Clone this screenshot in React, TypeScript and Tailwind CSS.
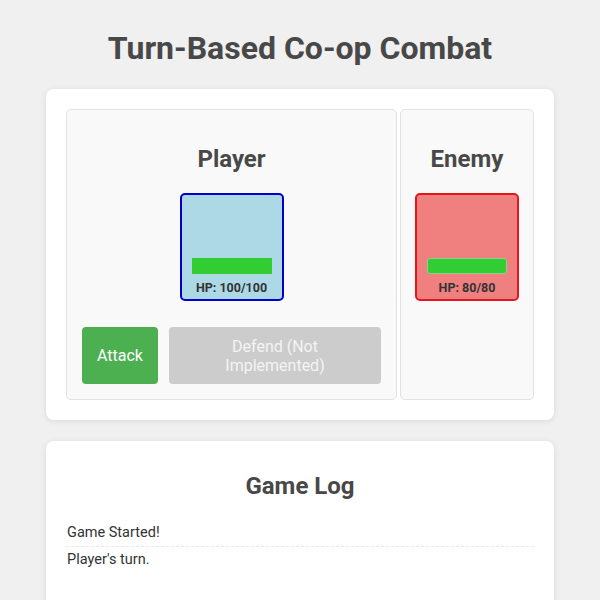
import React from "react";

function HealthBox({
  hp,
  max,
  box,
  bar,
}: {
  hp: number;
  max: number;
  box: string;
  bar: string;
}) {
  return (
    <div
      className={`w-[104px] h-[108px] rounded-[5px] border-2 flex flex-col items-center justify-end pb-[4px] ${box}`}
    >
      <div className={`w-[80px] h-[16px] mb-[7px] ${bar}`} />
      <div className="text-[12.5px] leading-[14px] font-bold text-[#333]">
        HP: {hp}/{max}
      </div>
    </div>
  );
}

export default function App() {
  const log = ["Game Started!", "Player's turn."];
  return (
    <div
      className="min-h-screen bg-[#f0f0f0] px-[46px] pt-[29px] pb-5 text-[#333]"
      style={{ fontFamily: "Roboto, 'Noto Sans', sans-serif" }}
    >
      <h1 className="text-[32px] leading-[38px] font-bold text-center text-[#484848] mb-[22px]">
        Turn-Based Co-op Combat
      </h1>

      <div className="bg-white rounded-lg shadow-[0_1px_6px_rgba(0,0,0,0.1)] p-5">
        <div className="flex justify-between">
          {/* player side */}
          <div className="w-[331px] bg-[#f9f9f9] border border-[#e2e2e2] rounded-[5px] p-[15px] flex flex-col items-center">
            <h2 className="mt-[20px] mb-[20px] text-[24px] leading-[28px] font-bold text-[#484848]">
              Player
            </h2>
            <HealthBox
              hp={100}
              max={100}
              box="bg-[#add8e6] border-[#0000cd]"
              bar="bg-[#32cd32]"
            />
            <div className="mt-[26px] self-stretch flex gap-[11px]">
              <button className="w-[76px] h-[57px] rounded-[4px] bg-[#4caf50] text-white text-[16px] leading-[20px]">
                Attack
              </button>
              <button
                disabled
                className="flex-1 h-[57px] rounded-[4px] bg-[#cccccc] text-[#f4f4f4] text-[16px] leading-[19px]"
              >
                Defend (Not
                <br />
                Implemented)
              </button>
            </div>
          </div>

          {/* enemy side */}
          <div className="w-[134px] bg-[#f9f9f9] border border-[#e2e2e2] rounded-[5px] p-[15px] flex flex-col items-center">
            <h2 className="mt-[20px] mb-[20px] text-[24px] leading-[28px] font-bold text-[#484848]">
              Enemy
            </h2>
            <HealthBox
              hp={80}
              max={80}
              box="bg-[#f08080] border-[#e3161b]"
              bar="bg-[#32cd32] border border-[#8ed08a] rounded-[3px]"
            />
          </div>
        </div>
      </div>

      <div className="mt-[21px] bg-white rounded-lg shadow-[0_1px_6px_rgba(0,0,0,0.1)] px-5 pt-[10px] pb-[60px]">
        <h2 className="mt-[21px] mb-[20px] text-[24px] leading-[28px] font-bold text-center text-[#484848]">
          Game Log
        </h2>
        <div>
          {log.map((line, i) => (
            <div
              key={i}
              className={`py-[5px] text-[14.5px] leading-[16px] text-[#333] px-[1px] ${
                i < log.length - 1 ? "border-b border-dashed border-[#e6e6e6]" : ""
              }`}
            >
              {line}
            </div>
          ))}
        </div>
      </div>
    </div>
  );
}
